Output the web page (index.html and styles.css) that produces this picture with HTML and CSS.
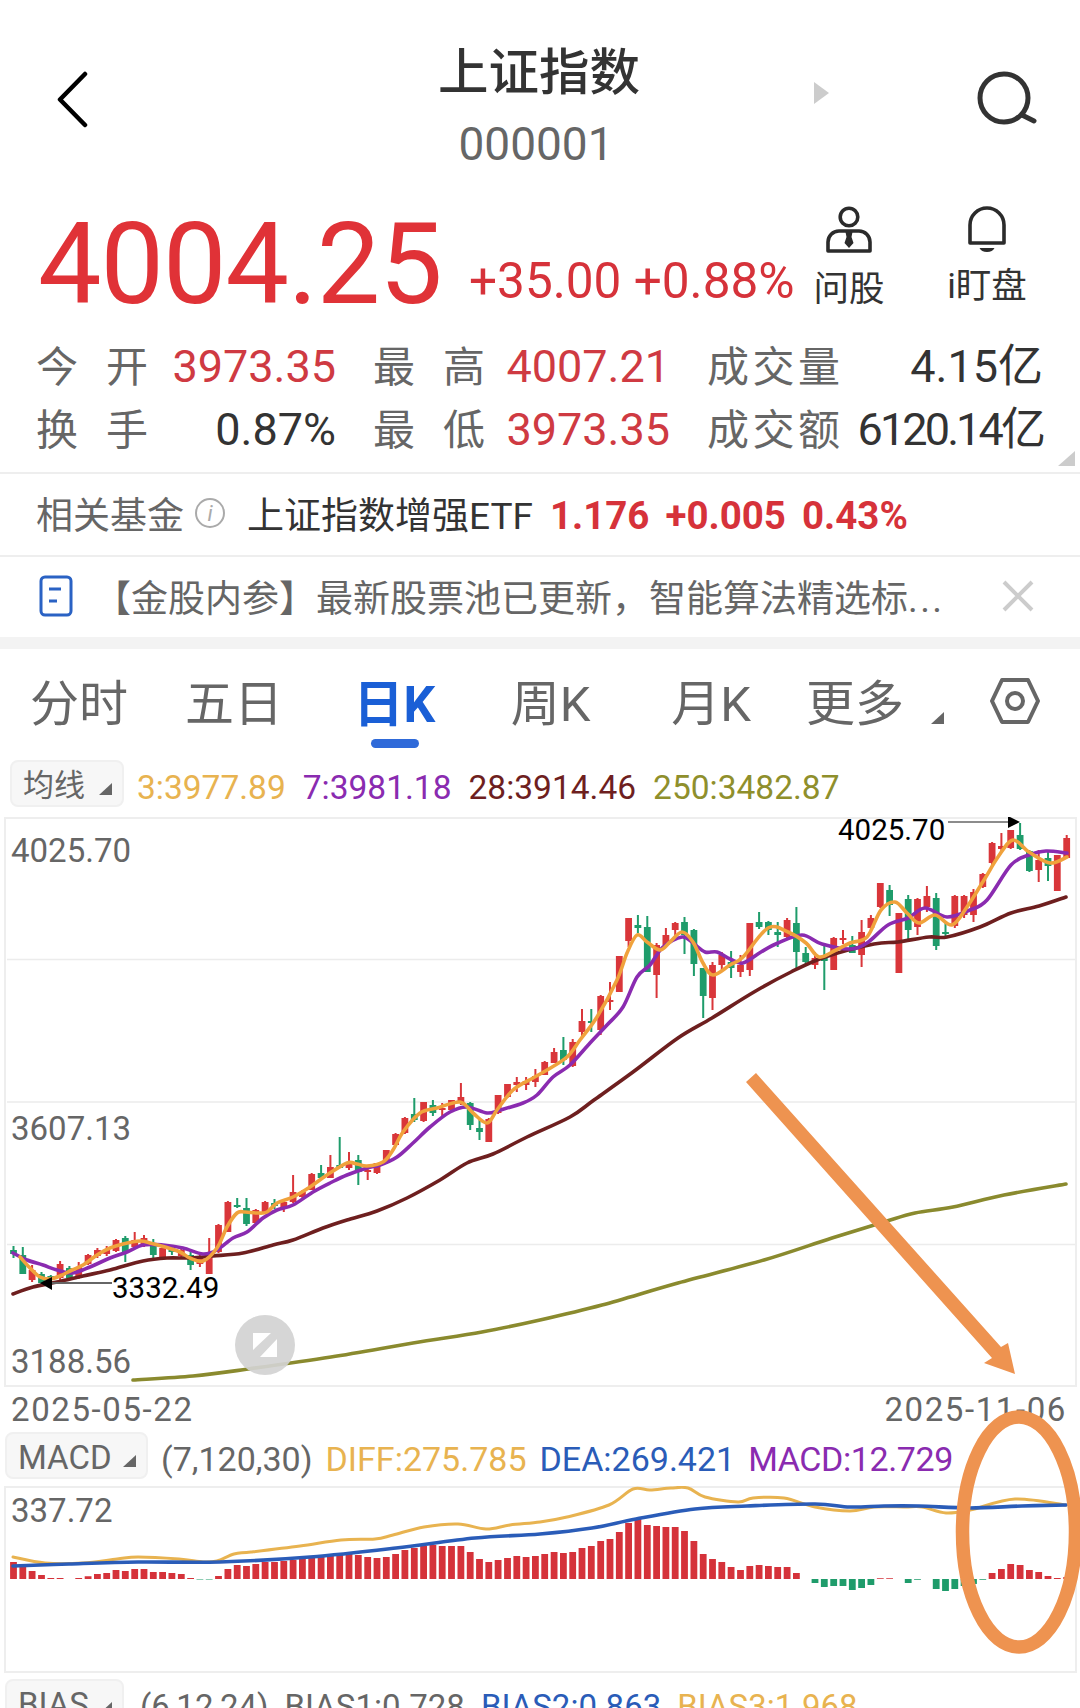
FILE: index.html
```html
<!DOCTYPE html>
<html lang="zh-CN">
  <head>
    <meta charset="UTF-8" />
    <meta name="viewport" content="width=device-width, initial-scale=1.0" />
    <title>上证指数</title>
    <link rel="stylesheet" href="styles.css">
  </head>
  <body>
    <div class="page">
      <header class="header">
        <svg class="back" width="32" height="60" viewBox="0 0 32 60"><polyline points="28,4 3,29.5 28,55" fill="none" stroke="#000" stroke-width="4.5" stroke-linecap="round" stroke-linejoin="round"/></svg>
        <div class="title-block">
          <div class="title">上证指数</div>
          <div class="code">000001</div>
        </div>
        <div class="next"></div>
        <svg class="search" width="62" height="60" viewBox="0 0 62 60"><circle cx="27" cy="28" r="24" fill="none" stroke="#333" stroke-width="5"/><path d="M45 45 L57 51" fill="none" stroke="#333" stroke-width="5" stroke-linecap="round"/></svg>
      </header>

      <section class="quote">
        <div class="price">4004.25</div>
        <div class="change">+35.00 +0.88%</div>
        <div class="actions">
          <div class="action">
            <svg width="50" height="50" viewBox="0 0 50 50"><circle cx="25" cy="11" r="8.8" fill="none" stroke="#2b2b2b" stroke-width="3.6"/><path d="M4 45 V36 A11 11 0 0 1 15 25 H35 A11 11 0 0 1 46 36 V45 Z" fill="none" stroke="#2b2b2b" stroke-width="3.6" stroke-linejoin="round"/><path d="M21.5 26 H28.5 L27.5 31 L29.5 37 L25 42 L20.5 37 L22.5 31 Z" fill="#2b2b2b"/></svg>
            <span>问股</span>
          </div>
          <div class="action action-watch">
            <svg width="50" height="50" viewBox="0 0 50 50"><path d="M8 37 V19 A17 17 0 0 1 42 19 V37 Z" fill="none" stroke="#2b2b2b" stroke-width="3.6" stroke-linejoin="round"/><path d="M17.5 42 H32.5 A8 6 0 0 1 17.5 42 Z" fill="#2b2b2b"/></svg>
            <span>i盯盘</span>
          </div>
        </div>
      </section>

      <section class="stats">
        <div class="stat"><span class="stat-label">今开</span><span class="stat-value up">3973.35</span></div>
        <div class="stat"><span class="stat-label">最高</span><span class="stat-value up">4007.21</span></div>
        <div class="stat"><span class="stat-label wide">成交量</span><span class="stat-value">4.15亿</span></div>
        <div class="stat"><span class="stat-label">换手</span><span class="stat-value">0.87%</span></div>
        <div class="stat"><span class="stat-label">最低</span><span class="stat-value up">3973.35</span></div>
        <div class="stat"><span class="stat-label wide">成交额</span><span class="stat-value tight">6120.14亿</span></div>
        <div class="corner"></div>
      </section>

      <section class="fund">
        <span class="fund-label">相关基金</span>
        <span class="info">i</span>
        <span class="fund-name">上证指数增强ETF</span>
        <span class="fund-num">1.176</span>
        <span class="fund-num">+0.005</span>
        <span class="fund-num">0.43%</span>
      </section>

      <section class="news">
        <svg width="34" height="42" viewBox="0 0 34 42"><rect x="2" y="2" width="30" height="38" rx="4" fill="none" stroke="#2a62c4" stroke-width="3"/><path d="M10 14 H22 M10 26 H18" stroke="#2a62c4" stroke-width="3"/></svg>
        <span class="news-text">【金股内参】最新股票池已更新，智能算法精选标<span class="dots">...</span></span>
        <svg class="close" width="32" height="32" viewBox="0 0 32 32"><path d="M2 2 L30 30 M30 2 L2 30" stroke="#ccc" stroke-width="4"/></svg>
      </section>

      <div class="band"></div>

      <nav class="tabs">
        <div class="tab">分时</div>
        <div class="tab">五日</div>
        <div class="tab active">日K<i class="tab-line"></i></div>
        <div class="tab">周K</div>
        <div class="tab">月K</div>
        <div class="tab">更多</div>
        <div class="tab-tools">
          <i class="caret caret-tab"></i>
          <svg width="50" height="46" viewBox="0 0 50 46"><path d="M12 2 H38 L48 23 L38 44 H12 L2 23 Z" fill="none" stroke="#666" stroke-width="4" stroke-linejoin="round"/><circle cx="25" cy="23" r="8" fill="none" stroke="#666" stroke-width="4"/></svg>
        </div>
      </nav>

      <div class="legend legend-ma">
        <div class="pill pill-ma">均线<i class="caret"></i></div>
        <span class="c-orange">3:3977.89</span>
        <span class="c-purple">7:3981.18</span>
        <span class="c-brown">28:3914.46</span>
        <span class="c-olive">250:3482.87</span>
      </div>

      <svg class="chart" width="1080" height="570" viewBox="0 817 1080 570">
        <rect x="5" y="818" width="1071" height="568" fill="#fff" stroke="#eee" stroke-width="2"/>
        <path d="M7 959.5 H1075 M7 1102 H1075 M7 1244.5 H1075" stroke="#ececec" stroke-width="1.6"/>
        <path id="wick-up" stroke="#d9363a" stroke-width="2" fill="none"/>
        <path id="wick-down" stroke="#1f9c6b" stroke-width="2" fill="none"/>
        <path id="body-up" fill="#d9363a"/>
        <path id="body-down" fill="#1f9c6b"/>
        <path id="ma250" class="line" stroke="#8a8a2e"/>
        <path id="ma28" class="line" stroke="#6e1f1f"/>
        <path id="ma7" class="line" stroke="#8a2bb0"/>
        <path id="ma3" class="line" stroke="#f0a23c"/>
        <text class="axis" x="11" y="862">4025.70</text>
        <text class="axis" x="11" y="1140">3607.13</text>
        <text class="axis" x="11" y="1373">3188.56</text>
        <text class="mark" x="838" y="840">4025.70</text>
        <path d="M948 822 H1009" stroke="#666" stroke-width="1.5"/>
        <path d="M1008 816 L1020 822 L1008 828 Z" fill="#000"/>
        <text class="mark" x="112" y="1298">3332.49</text>
        <path d="M51 1283 H112" stroke="#666" stroke-width="2"/>
        <path d="M52 1277 L40 1283 L52 1290 Z" fill="#000"/>
        <circle cx="265" cy="1345" r="30" fill="#d2d2d2" opacity="0.92"/>
        <path d="M253 1333 H271 L253 1350 Z M277 1339 V1357 H260 Z" fill="#fff"/>
      </svg>

      <div class="dates">
        <span>2025-05-22</span>
        <span>2025-11-06</span>
      </div>

      <div class="legend legend-macd">
        <div class="pill pill-macd">MACD<i class="caret"></i></div>
        <span>(7,120,30)</span>
        <span class="c-orange">DIFF:275.785</span>
        <span class="c-blue">DEA:269.421</span>
        <span class="c-purple">MACD:12.729</span>
      </div>

      <svg class="chart" width="1080" height="187" viewBox="0 1486 1080 187">
        <rect x="5" y="1487" width="1071" height="185" fill="#fff" stroke="#eee" stroke-width="2"/>
        <path id="macd-up" fill="#d5323a"/>
        <path id="macd-down" fill="#1f9c6b"/>
        <path id="diff" class="line line-thin" stroke="#e8b350"/>
        <path id="dea" class="line" stroke="#2a5cb8"/>
        <text class="axis" x="11" y="1522">337.72</text>
      </svg>

      <div class="legend legend-bias">
        <div class="pill pill-bias">BIAS<i class="caret"></i></div>
        <span>(6,12,24)</span>
        <span>BIAS1:0.728</span>
        <span class="c-blue">BIAS2:0.863</span>
        <span class="c-orange">BIAS3:1.968</span>
      </div>

      <!-- orange marks someone drew over the screenshot -->
      <svg class="scribble" width="1080" height="1708" viewBox="0 0 1080 1708">
        <polygon points="746,1082 756,1073 1001,1347 1008,1343 1015,1374 984,1363 992,1358" fill="#ee9350"/>
        <ellipse cx="1019" cy="1532" rx="56.5" ry="115" fill="none" stroke="#ee9350" stroke-width="13.5"/>
      </svg>
    </div>

    <script src="chart.js"></script>
  </body>
</html>
```

FILE: styles.css
```css
* {
  box-sizing: border-box;
}
html,
body {
  margin: 0;
  background: #fff;
}
body {
  width: 1080px;
  height: 1708px;
  overflow: hidden;
  font-family: Roboto, "Noto Sans CJK SC", sans-serif;
  color: #666;
}
i {
  font-style: normal;
}
.page {
  position: relative;
  height: 1708px;
  overflow: hidden;
}

/* header */
.header {
  display: flex;
  height: 200px;
}
.back {
  margin: 70px 0 0 57px;
  flex: none;
}
.title-block {
  margin: 47px 0 0 349px;
  width: 200px;
  flex: none;
}
.title {
  font-size: 50.5px;
  line-height: 51px;
  font-weight: 500;
  color: #333;
  text-align: center;
  white-space: nowrap;
}
.code {
  margin: 23px 0 0 -4px;
  font-size: 46px;
  line-height: 46px;
  text-align: center;
}
.next {
  margin: 82px 0 0 176px;
  width: 15px;
  height: 22px;
  flex: none;
  background: #ccc;
  clip-path: polygon(0 0, 100% 50%, 0 100%);
}
.search {
  margin: 70px 0 0 148px;
  flex: none;
}

/* price */
.quote {
  display: flex;
  height: 135px;
  padding-left: 38px;
}
.price {
  margin-top: 8px;
  width: 431px;
  flex: none;
  font-size: 113px;
  line-height: 113px;
  letter-spacing: -1px;
  color: #e03237;
}
.change {
  margin-top: 57px;
  font-size: 49.5px;
  line-height: 49px;
  color: #d6323a;
  white-space: nowrap;
}
.actions {
  display: flex;
  gap: 38px;
  margin-left: auto;
  margin-right: 43px;
  margin-top: 6px;
}
.action {
  display: flex;
  flex-direction: column;
  align-items: center;
  width: 100px;
  font-size: 35.5px;
  line-height: 35px;
  color: #333;
}
.action span {
  margin-top: 16px;
}
.action-watch span {
  margin-top: 13px;
}

/* stats */
.stats {
  position: relative;
  display: grid;
  grid-template-columns: 300px 297px 336px;
  column-gap: 37px;
  height: 137px;
  padding-left: 36px;
  align-content: start;
}
.stat {
  display: flex;
  justify-content: space-between;
  align-items: baseline;
  height: 63px;
  line-height: 63px;
}
.stat-label {
  width: 112px;
  font-size: 42px;
  text-align-last: justify;
}
.stat-label.wide {
  width: 133px;
}
.stat-value {
  font-size: 45px;
  color: #333;
  white-space: nowrap;
}
.stat-value.up {
  color: #cf3a42;
}
.stat-value.tight {
  letter-spacing: -2.9px;
}
.corner {
  position: absolute;
  right: 5px;
  bottom: 6px;
  width: 17px;
  height: 15px;
  background: #ccc;
  clip-path: polygon(100% 0, 100% 100%, 0 100%);
}

/* fund and news rows */
.fund {
  display: flex;
  align-items: center;
  height: 83px;
  padding: 0 0 3px 36px;
  border-top: 2px solid #eee;
  font-size: 37px;
}
.info {
  display: flex;
  justify-content: center;
  align-items: center;
  margin-left: 11px;
  width: 30px;
  height: 30px;
  border: 2px solid #aaa;
  border-radius: 50%;
  font-size: 22px;
  font-style: italic;
  color: #aaa;
}
.fund-name {
  margin-left: 22px;
  color: #333;
}
.fund-num {
  margin: 5px 0 0 16px;
  font-size: 38.5px;
  font-weight: 700;
  color: #d6323a;
}
.fund-name + .fund-num {
  margin-left: 17px;
}
.news {
  display: flex;
  align-items: center;
  height: 82px;
  padding: 0 0 2px 39px;
  border-top: 2px solid #eee;
  font-size: 37px;
}
.news-text {
  margin-left: 21px;
  width: 890px;
  flex: none;
  white-space: nowrap;
}
.dots {
  letter-spacing: 2.4px;
}
.close {
  margin-left: 18px;
  flex: none;
}
.band {
  height: 12px;
  background: #f3f3f3;
}

/* tabs */
.tabs {
  display: grid;
  grid-template-columns: 158px 152px 169px 143px 178px 110px 1fr;
  height: 111px;
  padding-top: 32px;
}
.tab {
  display: flex;
  flex-direction: column;
  align-items: center;
  font-size: 49px;
  line-height: 48px;
}
.tab.active {
  font-size: 50px;
  font-weight: 700;
  color: #1a5fd6;
}
.tab-line {
  margin-top: 10px;
  width: 48px;
  height: 9px;
  border-radius: 5px;
  background: #2f6ad9;
}
.tab-tools {
  display: flex;
  justify-content: space-between;
  align-items: flex-start;
  padding: 0 40px 0 21px;
}
.tab-tools svg {
  margin-top: -3px;
}
.caret {
  display: inline-block;
  width: 13px;
  height: 12px;
  background: #666;
  clip-path: polygon(100% 0, 100% 100%, 0 100%);
}
.caret-tab {
  margin-top: 31px;
}

/* indicator legends */
.legend {
  display: flex;
  align-items: flex-start;
  font-size: 34px;
  line-height: 55px;
  white-space: nowrap;
}
.legend-ma {
  height: 57px;
  padding-left: 10px;
  gap: 17px;
  font-size: 33.5px;
}
.legend-ma .pill + span {
  margin-left: -4px;
}
.legend-macd {
  height: 54px;
  padding-left: 5px;
  gap: 13px;
}
.legend-macd .c-purple {
  letter-spacing: -0.4px;
}
.legend-bias {
  margin-top: 6px;
  padding-left: 5px;
  gap: 16px;
  font-size: 33px;
}
.pill {
  display: flex;
  justify-content: space-between;
  align-items: center;
  height: 47px;
  line-height: 42px;
  padding: 4px 10px 0 11px;
  font-size: 33px;
  background: #f7f7f7;
  border: 2px solid #f0f0f0;
  border-radius: 8px;
  flex: none;
}
.pill .caret {
  align-self: flex-end;
  margin-bottom: 10px;
}
.pill-ma {
  width: 114px;
  font-size: 31px;
}
.pill-macd {
  width: 143px;
}
.pill-bias {
  width: 119px;
}
.c-orange {
  color: #e8b350;
}
.c-purple {
  color: #8a2bb0;
}
.c-brown {
  color: #6e1f1f;
}
.c-olive {
  color: #8f8f2c;
}
.c-blue {
  color: #2a5cb8;
}

/* charts */
.chart {
  display: block;
}
.line {
  fill: none;
  stroke-width: 3.6;
  stroke-linecap: round;
  stroke-linejoin: round;
}
.line-thin {
  stroke-width: 3;
}
.axis {
  font-size: 33px;
  fill: #666;
}
.mark {
  font-size: 29.5px;
  fill: #000;
}
.dates {
  display: flex;
  justify-content: space-between;
  height: 45px;
  padding: 0 13px 0 11px;
  font-size: 33px;
  line-height: 45px;
  letter-spacing: 1.6px;
}
.scribble {
  position: absolute;
  top: 0;
  left: 0;
  pointer-events: none;
}
```

FILE: chart.js
```javascript
// candles: [up, high, bodyTop, bodyBottom, low] in svg y
const candles = [
  [0,1246,1250,1254,1258],[0,1247,1255,1274,1274],[1,1265,1270,1280,1282],[0,1272,1274,1283,1284],
  [0,1275,1276,1280,1283],[1,1261,1264,1278,1281],[0,1266,1268,1278,1280],[1,1262,1267,1278,1279],
  [1,1254,1255,1264,1265],[1,1248,1250,1256,1258],[1,1246,1250,1254,1256],[1,1239,1240,1251,1252],
  [0,1236,1238,1252,1262],[1,1232,1240,1247,1248],[1,1235,1238,1244,1247],[0,1239,1243,1255,1258],
  [1,1246,1248,1258,1259],[0,1247,1248,1252,1255],[1,1248,1250,1256,1259],[0,1250,1255,1265,1270],
  [1,1255,1258,1264,1267],[1,1238,1253,1274,1274],[1,1224,1225,1252,1253],[1,1201,1202,1232,1232],
  [0,1198,1205,1207,1208],[0,1198,1208,1224,1226],[1,1209,1210,1223,1225],[1,1201,1202,1213,1214],
  [0,1199,1203,1206,1209],[1,1200,1202,1208,1212],[1,1175,1192,1202,1203],[1,1190,1192,1197,1198],
  [1,1173,1174,1190,1190],[0,1165,1173,1178,1180],[1,1155,1167,1178,1178],[0,1137,1165,1168,1168],
  [1,1152,1162,1168,1170],[0,1155,1160,1172,1185],[1,1168,1170,1171,1180],[1,1163,1163,1173,1174],
  [1,1150,1150,1163,1164],[1,1133,1134,1145,1146],[1,1117,1118,1133,1134],[0,1098,1114,1120,1122],
  [1,1102,1102,1121,1122],[0,1100,1105,1113,1116],[1,1103,1108,1110,1118],[1,1100,1100,1110,1112],
  [1,1083,1097,1103,1105],[0,1102,1103,1125,1130],[0,1118,1128,1132,1140],[1,1118,1119,1142,1142],
  [1,1095,1095,1113,1114],[1,1084,1084,1097,1098],[1,1077,1082,1085,1092],[1,1077,1081,1085,1090],
  [1,1069,1076,1082,1087],[1,1061,1062,1075,1075],[1,1048,1052,1063,1063],[0,1037,1050,1060,1065],
  [1,1039,1042,1066,1067],[1,1009,1021,1032,1038],[0,1009,1021,1022,1032],[1,995,996,1030,1035],
  [1,982,1000,1002,1010],[1,956,956,992,992],[1,918,918,941,947],[0,915,925,928,933],
  [0,916,927,972,972],[1,943,945,975,998],[1,928,935,945,946],[1,922,923,930,937],
  [0,917,922,935,954],[0,929,930,964,976],[0,968,968,996,1018],[1,962,965,998,1010],
  [1,952,955,965,970],[0,951,962,968,978],[1,955,965,972,977],[1,923,923,970,976],
  [0,912,922,927,929],[0,921,922,930,935],[0,922,932,935,947],[1,918,920,937,940],
  [0,907,923,952,968],[0,947,953,962,965],[1,952,958,965,969],[0,943,958,961,990],
  [1,937,938,970,970],[1,930,938,940,944],[0,936,945,953,953],[1,920,932,955,967],
  [1,915,918,928,930],[1,883,883,907,908],[0,885,890,905,916],[1,913,913,973,973],
  [0,895,899,930,939],[1,898,899,927,935],[1,886,896,907,912],[0,893,898,946,950],
  [0,923,932,934,938],[1,895,896,926,928],[1,895,896,915,918],[1,889,892,915,922],
  [1,873,874,887,888],[1,842,843,863,866],[1,833,846,849,852],[1,830,830,848,849],
  [0,823,835,849,850],[0,850,851,871,872],[1,850,860,870,882],[0,850,858,866,881],
  [1,855,855,891,891],[1,835,838,858,858]
];

// macd histogram heights, negative goes below the zero line
const macd = [
  17,12,8,4,1,1,0,1,2.7,5,6,9,8,10,10,7,7,6,5,1,-0.6,-0.6,3,10,14,13,15,17,17,18,19,20,21,22,23,24,25,24,22,21,
  22,25,29,31,33,34,33,33,33,27,20,17,19,21,23,22,23,25,27,26,27,31,33,38,40,47,56,60,54,53,52,52,48,38,25,20,
  17,12,9,13,14,13,12,12,6,0,-4,-8,-7,-7,-11,-9,-6,0.7,0.7,0,-4,-0.7,0,-10,-12,-10,-7,-5,-0.7,6,10,15,14,9,7,3,1,2
];

const ma3 = [[20,1257],[30,1268],[40,1277],[50,1279],[60,1276],[72,1270],[83,1265],[97,1255],[110,1248],[123,1244],[140,1241],[150,1243],[165,1247],[180,1252],[190,1258],[203,1261],[217,1248],[227,1227],[237,1213],[245,1212],[257,1213],[267,1212],[277,1203],[293,1197],[310,1187],[327,1175],[347,1163],[357,1164],[367,1166],[383,1162],[393,1150],[403,1132],[420,1113],[437,1108],[460,1102],[473,1113],[487,1123],[497,1110],[513,1090],[533,1078],[547,1070],[567,1057],[580,1040],[597,1017],[617,980],[627,953],[637,935],[647,942],[660,950],[670,942],[682,932],[693,942],[703,963],[713,975],[730,965],[743,957],[768,928],[788,932],[806,943],[819,957],[836,950],[850,943],[867,937],[881,910],[895,902],[907,913],[919,923],[935,915],[952,925],[967,907],[984,880],[998,857],[1013,840],[1029,852],[1050,863],[1067,857]];
const ma7 = [[13,1253],[27,1260],[43,1265],[57,1270],[73,1273],[90,1267],[110,1258],[127,1252],[143,1245],[163,1245],[183,1248],[203,1254],[217,1250],[233,1238],[247,1232],[263,1218],[277,1210],[293,1205],[313,1192],[330,1183],[347,1175],[367,1168],[380,1165],[397,1157],[413,1143],[430,1127],[450,1112],[467,1107],[487,1113],[500,1110],[523,1103],[537,1095],[553,1077],[570,1065],[590,1043],[607,1025],[623,1007],[637,977],[650,965],[663,947],[682,937],[693,943],[705,952],[717,952],[730,959],[743,963],[761,952],[778,943],[802,935],[822,944],[850,949],[867,943],[888,925],[908,918],[925,908],[947,917],[970,910],[987,900],[1011,865],[1029,855],[1046,851],[1067,853]];
const ma28 = [[13,1294],[33,1287],[57,1282],[83,1276],[110,1270],[143,1261],[167,1258],[190,1258],[213,1256],[243,1253],[273,1245],[293,1240],[323,1228],[347,1220],[377,1211],[407,1198],[440,1180],[467,1163],[493,1154],[527,1137],[570,1117],[594,1100],[633,1072],[678,1038],[712,1018],[754,992],[791,972],[825,957],[874,944],[898,942],[929,937],[947,937],[980,927],[1011,913],[1039,906],[1066,897]];
const ma250 = [[133,1380],[193,1376],[248,1369],[331,1357],[413,1343],[482,1332],[540,1320],[602,1305],[678,1283],[764,1260],[832,1238],[884,1222],[915,1213],[953,1207],[1004,1195],[1066,1184]];
const diff = [[13,1557],[45,1563],[83,1563],[117,1559],[138,1557],[179,1559],[203,1562],[217,1561],[234,1554],[251,1552],[300,1546],[341,1540],[375,1539],[393,1535],[424,1527],[458,1524],[486,1529],[510,1525],[540,1522],[567,1517],[609,1505],[633,1489],[650,1490],[671,1488],[688,1488],[705,1497],[738,1502],[753,1498],[784,1498],[815,1507],[850,1511],[874,1507],[905,1507],[922,1507],[946,1513],[970,1510],[1015,1499],[1066,1505]];
const dea = [[13,1566],[69,1564],[138,1562],[220,1562],[310,1557],[396,1548],[475,1538],[540,1534],[592,1528],[636,1519],[695,1509],[747,1506],[815,1504],[850,1507],[884,1506],[919,1506],[970,1508],[1022,1506],[1066,1505]];

const slotX = i => 13.5 + 9.32 * i;
const zeroY = 1579;

function setPath(id, d) {
  document.getElementById(id).setAttribute("d", d);
}

// catmull-rom through the points, written as cubic beziers
function smooth(pts) {
  let d = "M" + pts[0][0] + " " + pts[0][1];
  for (let i = 0; i < pts.length - 1; i++) {
    const p0 = pts[i - 1] || pts[i];
    const p1 = pts[i];
    const p2 = pts[i + 1];
    const p3 = pts[i + 2] || p2;
    const c1x = p1[0] + (p2[0] - p0[0]) / 6;
    const c1y = p1[1] + (p2[1] - p0[1]) / 6;
    const c2x = p2[0] - (p3[0] - p1[0]) / 6;
    const c2y = p2[1] - (p3[1] - p1[1]) / 6;
    d += `C${c1x.toFixed(1)} ${c1y.toFixed(1)} ${c2x.toFixed(1)} ${c2y.toFixed(1)} ${p2[0]} ${p2[1]}`;
  }
  return d;
}

function drawCandles() {
  const wicks = { 0: "", 1: "" };
  const bodies = { 0: "", 1: "" };
  candles.forEach((c, i) => {
    const x = slotX(i);
    const h = Math.max(c[3] - c[2], 2);
    wicks[c[0]] += `M${x.toFixed(1)} ${c[1]}V${c[4]}`;
    bodies[c[0]] += `M${(x - 3.4).toFixed(1)} ${c[2]}h6.8v${h}h-6.8z`;
  });
  setPath("wick-up", wicks[1]);
  setPath("wick-down", wicks[0]);
  setPath("body-up", bodies[1]);
  setPath("body-down", bodies[0]);
}

function drawMacd() {
  let up = "";
  let down = "";
  macd.forEach((v, i) => {
    if (!v) return;
    const x = (slotX(i) - 3.4).toFixed(1);
    if (v > 0) up += `M${x} ${zeroY - v}h6.8v${v}h-6.8z`;
    else down += `M${x} ${zeroY}h6.8v${-v}h-6.8z`;
  });
  setPath("macd-up", up);
  setPath("macd-down", down);
}

drawCandles();
drawMacd();
setPath("ma250", smooth(ma250));
setPath("ma28", smooth(ma28));
setPath("ma7", smooth(ma7));
setPath("ma3", smooth(ma3));
setPath("diff", smooth(diff));
setPath("dea", smooth(dea));
```
